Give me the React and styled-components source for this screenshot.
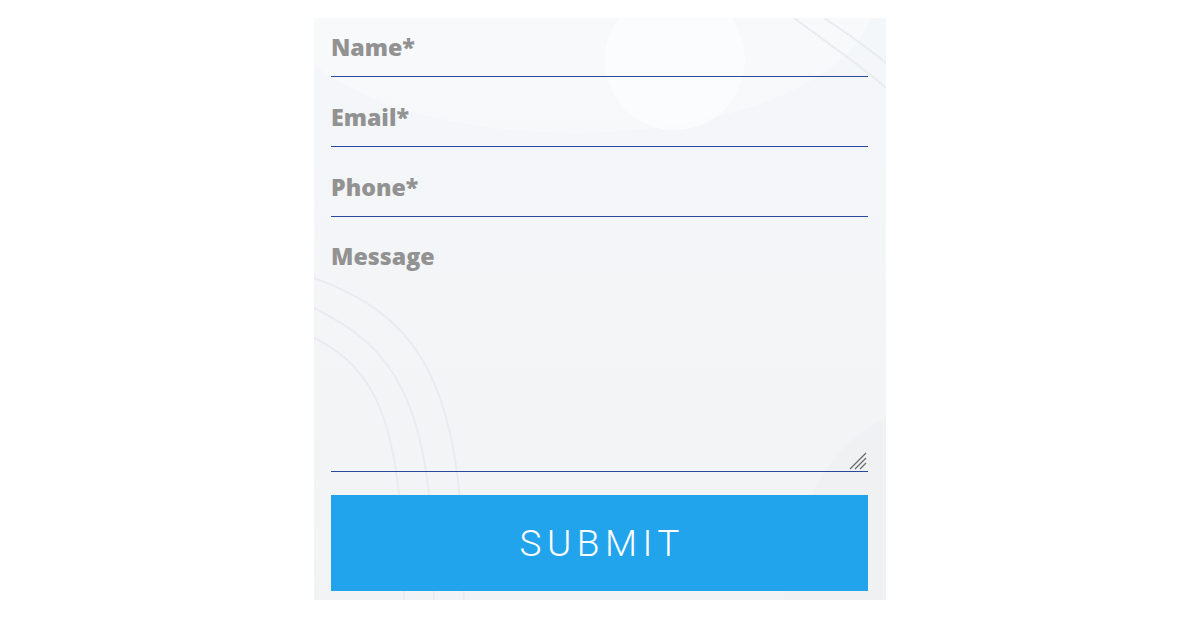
import styled, { createGlobalStyle } from "styled-components";

const GlobalStyle = createGlobalStyle`
  body {
    margin: 0;
    background: #ffffff;
    font-family: "Open Sans", Arial, sans-serif;
  }
`;

const Page = styled.div`
  display: flex;
  justify-content: center;
  padding-top: 18px;
`;

const Panel = styled.div`
  position: relative;
  width: 572px;
  height: 582px;
  box-sizing: border-box;
  padding: 0 18px 9px 17px;
  background: linear-gradient(180deg, #f4f7f9 0%, #f3f5f7 50%, #f2f3f5 100%);
  overflow: hidden;
`;

const Decor = styled.svg`
  position: absolute;
  inset: 0;
  pointer-events: none;
`;

const Form = styled.form`
  position: relative;
  display: flex;
  flex-direction: column;
`;

const Field = styled.input`
  height: 59px;
  margin-bottom: 11px;
  padding: 0;
  border: none;
  border-bottom: 1.5px solid #2a489c;
  background: transparent;
  font-family: "Open Sans", Arial, sans-serif;
  font-weight: 800;
  font-size: 23.2px;
  color: #555;
  outline: none;
  box-sizing: border-box;

  &::placeholder {
    color: #929292;
    opacity: 1;
  }
`;

const MessageWrap = styled.div`
  position: relative;
  display: flex;
  margin-top: 1px;
`;

const Message = styled.textarea`
  flex: 1;
  height: 243px;
  padding: 11px 0 0;
  border: none;
  border-bottom: 1.5px solid #2a489c;
  background: transparent;
  font-family: "Open Sans", Arial, sans-serif;
  font-weight: 800;
  font-size: 23.2px;
  color: #555;
  outline: none;
  resize: none;
  box-sizing: border-box;

  &::placeholder {
    color: #929292;
    opacity: 1;
  }
`;

const Grip = styled.svg`
  position: absolute;
  right: 1px;
  bottom: 2px;
  pointer-events: none;
`;

const Submit = styled.button`
  margin-top: 23px;
  height: 96px;
  border: none;
  background: #22a4ec;
  color: #ffffff;
  font-family: Roboto, "Open Sans", sans-serif;
  font-weight: 300;
  font-size: 37px;
  letter-spacing: 5.5px;
  text-indent: 5.5px;
  text-transform: uppercase;
  cursor: pointer;
`;

export default function App() {
  return (
    <>
      <GlobalStyle />
      <Page>
        <Panel>
          <Decor width="572" height="582" viewBox="0 0 572 582">
            <circle cx="361" cy="42" r="70" fill="#ffffff" opacity="0.55" />
            <ellipse cx="260" cy="-20" rx="300" ry="135" fill="#ffffff" opacity="0.25" />
            <g fill="none" stroke="#e9ecef" strokeWidth="2">
              <path d="M480 0 C 520 30, 550 50, 572 70" />
              <path d="M510 0 C 540 20, 560 35, 572 45" />
              <path d="M0 290 C 80 330, 120 380, 120 582" />
              <path d="M0 320 C 60 350, 90 400, 90 582" />
              <path d="M0 260 C 110 300, 150 370, 150 582" />
            </g>
            <path d="M470 582 C 480 470, 530 420, 572 400 L 572 582 Z" fill="#eef0f2" opacity="0.7" />
          </Decor>
          <Form onSubmit={(e) => e.preventDefault()}>
            <Field type="text" placeholder="Name*" />
            <Field type="email" placeholder="Email*" />
            <Field type="tel" placeholder="Phone*" />
            <MessageWrap>
              <Message placeholder="Message" />
              <Grip width="18" height="18" viewBox="0 0 18 18">
                <g stroke="#6b6b6b" strokeWidth="1.3">
                  <line x1="1" y1="17" x2="17" y2="1" />
                  <line x1="6" y1="17" x2="17" y2="6" />
                  <line x1="11" y1="17" x2="17" y2="11" />
                </g>
              </Grip>
            </MessageWrap>
            <Submit type="submit">Submit</Submit>
          </Form>
        </Panel>
      </Page>
    </>
  );
}
